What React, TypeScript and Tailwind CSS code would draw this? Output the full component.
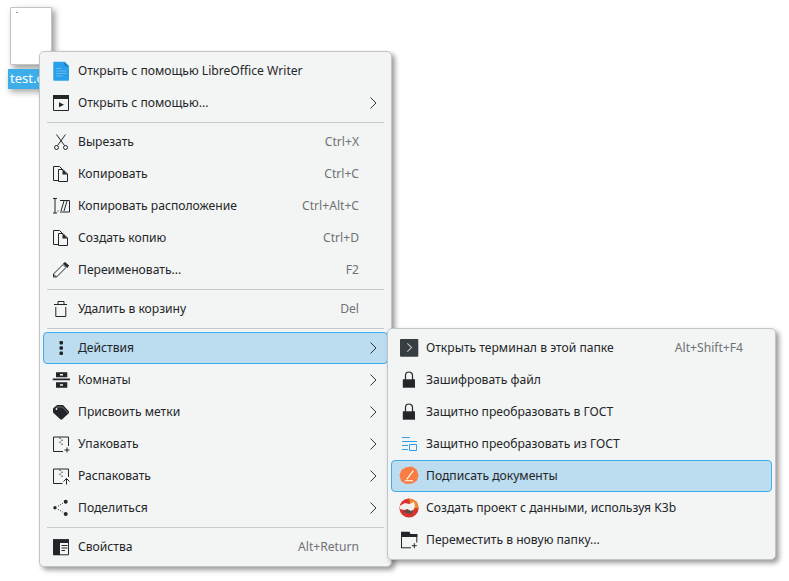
import type { ReactNode } from "react";

const ink = "#232629";

function Svg({ children }: { children: ReactNode }) {
  return (
    <svg width="22" height="22" viewBox="0 0 22 22" fill="none" stroke={ink} strokeWidth="1" className="shrink-0">
      {children}
    </svg>
  );
}

const icons: Record<string, ReactNode> = {
  writer: (
    <Svg>
      <path d="M3.300 2.500a.8.8 0 0 1 .8-.8H14.500l4.500 4.500v13.700a.8.8 0 0 1-.8.8H4.100a.8.8 0 0 1-.8-.8z" fill="#2a9fea" stroke="none" />
      <path d="M14.500 1.700l4.500 4.500h-4.500z" fill="#1b7fc4" stroke="none" />
      <path d="M6 8.500h5M6 11h10M6 13.500h10M6 16h7" stroke="#63baf1" />
    </Svg>
  ),
  openWith: (
    <Svg>
      <path d="M3.500 3.500h15v15h-15z" />
      <path d="M3 3h16v4H3z" fill={ink} stroke="none" />
      <path d="M9 10.300l5 2.500-5 2.500z" fill={ink} stroke="none" />
    </Svg>
  ),
  cut: (
    <Svg>
      <path d="M6.500 3.500l8 11M15.500 3.500l-8 11" />
      <circle cx="6.500" cy="16.500" r="2" />
      <circle cx="15.500" cy="16.500" r="2" />
    </Svg>
  ),
  copy: (
    <Svg>
      <path d="M8.500 17.500H3.500V3.500h6l3 3" />
      <path d="M8.500 6.500h4.500l4.500 4.500v7.500h-9z" fill="#f3f4f4" />
      <path d="M12.500 6.500l5 5h-5z" fill={ink} stroke="none" />
    </Svg>
  ),
  copyPath: (
    <Svg>
      <path d="M3 3.500h4M5 3.500v14.500M3 18h4" />
      <path d="M10 5.500h9.500v11.500H10" />
      <path d="M11 16l3-10M14 16l3-10" />
      <path d="M7.500 15.500h1v1h-1z" fill={ink} stroke="none" />
    </Svg>
  ),
  rename: (
    <Svg>
      <path d="M3.500 15l9.500-9.500 3 3-9.500 9.500H3.500z" />
      <path d="M4 15.500l2.500 2.500" />
      <path d="M13 4.500l2-1.500 4 3.500-1.500 2.500z" fill={ink} stroke="none" />
    </Svg>
  ),
  trash: (
    <Svg>
      <path d="M4 6.500h13M8 6V3.500h6V6M5.800 9v9.500h10V9" />
    </Svg>
  ),
  dots: (
    <Svg>
      <g fill={ink} stroke="none">
        <rect x="9.500" y="4" width="3.500" height="3.500" rx="1" />
        <rect x="9.500" y="9.200" width="3.500" height="3.500" rx="1" />
        <rect x="9.500" y="14.500" width="3.500" height="3.500" rx="1" />
      </g>
    </Svg>
  ),
  activities: (
    <Svg>
      <path d="M6 3.300h11.300v5H6zM6 13.300h11.300v5.400H6zM2.700 9.500H20v1.700H2.700z" fill={ink} stroke="none" />
      <path d="M10 5h3v1.600h-3zM10 15.200h3v1.600h-3z" fill="#f3f4f4" stroke="none" />
    </Svg>
  ),
  tag: (
    <Svg>
      <path d="M3 7.500L7 4h6l6 6.500v1.500L12 18.500h-1.500L3 11.500z" fill={ink} stroke="none" />
      <path d="M6 6h6.500l5.500 6" stroke="#7d8082" strokeWidth="0.8" />
      <circle cx="6.500" cy="8" r="0.9" fill="#f3f4f4" stroke="none" />
    </Svg>
  ),
  compress: (
    <Svg>
      <path d="M13 18.500H3.500V4h15v9" />
      <path d="M10 4.500v1.500M12 6.500v1.500M10 8.500v1.500M12 10.500V12" />
      <path d="M17 14.500v5M14.500 17h5" />
    </Svg>
  ),
  extract: (
    <Svg>
      <path d="M12.500 18.500H3.500V4h15v8" />
      <path d="M10 4.500v1.500M12 6.500v1.500M10 8.500v1.500M12 10.500V12" />
      <path d="M16.500 19.500v-6M13.500 16.500l3-3 3 3" />
    </Svg>
  ),
  share: (
    <Svg>
      <circle cx="5" cy="10.700" r="1.700" fill={ink} stroke="none" />
      <circle cx="15.700" cy="4.700" r="2" fill={ink} stroke="none" />
      <circle cx="15.700" cy="17" r="2" fill={ink} stroke="none" />
      <path d="M8 9.200l5-3M8 12.300l5 3" strokeDasharray="1 1.500" />
    </Svg>
  ),
  props: (
    <Svg>
      <path d="M3.500 3.800h15v15h-15z" />
      <path d="M3 3.300h16v3.700H3zM3 7h7v12H3z" fill={ink} stroke="none" />
      <path d="M11.500 9.500h6M11.500 12h6M11.500 14.500h3.500" />
    </Svg>
  ),
  terminal: (
    <svg width="22" height="22" viewBox="0 0 22 22" fill="none" className="shrink-0">
      <rect x="2" y="2" width="18.300" height="17.700" rx="1" fill="#383d41" />
      <path d="M9.300 6.300l4.300 4.200-4.300 4.200" stroke="#b6bbbf" strokeWidth="1.100" />
    </svg>
  ),
  lock: (
    <Svg>
      <path d="M7.500 11V6.500a3.500 3.500 0 0 1 7 0V11" strokeWidth="1.200" />
      <path d="M4.800 10.300h12.200v8.400H4.800z" fill={ink} stroke="none" />
    </Svg>
  ),
  gost: (
    <svg width="22" height="22" viewBox="0 0 22 22" fill="none" stroke="#2e9fe6" className="shrink-0">
      <path d="M4 4.500h8M4 8.500h15M4 12.500h6M4 16.500h6" />
      <path d="M11.500 11.500h7v6h-7z" />
    </svg>
  ),
  sign: (
    <svg width="22" height="22" viewBox="0 0 22 22" fill="none" className="shrink-0">
      <path d="M7.500 2.500l6.500-1 4.500 3 2 5.500-1.500 5.500-4.500 3-6.500.5-5-3-1.500-6 2-5z" fill="#f97c42" />
      <path d="M7 15.700h8M8.700 14.300l6.600-8.600" stroke="#fff" strokeWidth="1.100" />
    </svg>
  ),
  k3b: (
    <svg width="22" height="22" viewBox="0 0 22 22" fill="none" className="shrink-0">
      <circle cx="11" cy="11" r="9.600" fill="#d8322f" />
      <path d="M11 1.400a9.600 9.600 0 0 1 9.600 9.600l-5 .5-3-2.500z" fill="#ef8b2d" />
      <path d="M1.800 9l5-3 4.500 1 4.700-2 1 3.500-1.500 5-3 .5-3-2-3 1-4.700-1z" fill="#f1eeeb" />
      <path d="M5 15l4-2.500 4 1.500 3-1.500-3 4.500z" fill="#55504e" />
    </svg>
  ),
  newFolder: (
    <Svg>
      <path d="M3.500 19V8" />
      <path d="M3 2.700h8.500l1 2.300h7V8H3z" fill={ink} stroke="none" />
      <path d="M18.800 8v5.500M3.500 18.800H13" />
      <path d="M16.300 14.200v5M13.800 16.700h5" />
    </Svg>
  ),
};

type Row = {
  icon: string;
  label: string;
  shortcut?: string;
  arrow?: boolean;
  active?: boolean;
};

const mainMenu: (Row | "sep")[] = [
  { icon: "writer", label: "Открыть с помощью LibreOffice Writer" },
  { icon: "openWith", label: "Открыть с помощью...", arrow: true },
  "sep",
  { icon: "cut", label: "Вырезать", shortcut: "Ctrl+X" },
  { icon: "copy", label: "Копировать", shortcut: "Ctrl+C" },
  { icon: "copyPath", label: "Копировать расположение", shortcut: "Ctrl+Alt+C" },
  { icon: "copy", label: "Создать копию", shortcut: "Ctrl+D" },
  { icon: "rename", label: "Переименовать...", shortcut: "F2" },
  "sep",
  { icon: "trash", label: "Удалить в корзину", shortcut: "Del" },
  "sep",
  { icon: "dots", label: "Действия", arrow: true, active: true },
  { icon: "activities", label: "Комнаты", arrow: true },
  { icon: "tag", label: "Присвоить метки", arrow: true },
  { icon: "compress", label: "Упаковать", arrow: true },
  { icon: "extract", label: "Распаковать", arrow: true },
  { icon: "share", label: "Поделиться", arrow: true },
  "sep",
  { icon: "props", label: "Свойства", shortcut: "Alt+Return" },
];

const subMenu: Row[] = [
  { icon: "terminal", label: "Открыть терминал в этой папке", shortcut: "Alt+Shift+F4" },
  { icon: "lock", label: "Зашифровать файл" },
  { icon: "lock", label: "Защитно преобразовать в ГОСТ" },
  { icon: "gost", label: "Защитно преобразовать из ГОСТ" },
  { icon: "sign", label: "Подписать документы", active: true },
  { icon: "k3b", label: "Создать проект с данными, используя K3b" },
  { icon: "newFolder", label: "Переместить в новую папку..." },
];

function MenuRow({ icon, label, shortcut, arrow, active }: Row) {
  return (
    <div
      className={`flex h-8 items-center rounded-[4px] border pl-[6px] pr-[6px] ${
        active ? "border-[#3daee9] bg-[#bcdcf0]" : "border-transparent"
      }`}
    >
      {icons[icon]}
      <span className="ml-[6px] flex-1 whitespace-nowrap">{label}</span>
      {shortcut && <span className="text-[#6f7274]">{shortcut}</span>}
      <span className="flex w-[22px] shrink-0 justify-end">
        {arrow && (
          <svg width="16" height="16" viewBox="0 0 16 16" fill="none" stroke="#31363b" strokeWidth="1">
            <path d="M5.500 2.500L11 8l-5.500 5.500" />
          </svg>
        )}
      </span>
    </div>
  );
}

function Separator() {
  return (
    <div className="flex h-[7px] items-center px-[4px]">
      <div className="h-px w-full bg-[#c9cacb]" />
    </div>
  );
}

export default function App() {
  return (
    <div className="relative h-[581px] w-[789px] overflow-hidden bg-white font-['Noto_Sans',sans-serif] text-[12.13px] text-[#232629]">
      {/* desktop file */}
      <div className="absolute left-[10px] top-[7px] h-[58px] w-[42px] rounded-[1px] border border-[#c4c4c4] bg-white shadow-[3px_3px_6px_rgba(0,0,0,0.4)]">
        <div className="ml-[5px] mt-[4px] h-px w-[2px] bg-[#9a9a9a]" />
      </div>
      <div className="absolute left-[8px] top-[69px] flex h-[20px] w-[60px] items-center bg-[#3daee9] pl-[2px] text-[13px] text-white shadow-[2px_3px_6px_rgba(0,0,0,0.35)]">
        test.odt
      </div>

      {/* main context menu */}
      <div className="absolute left-[39px] top-[51px] w-[353px] rounded-[5px] border border-[#c3c4c5] bg-[#f3f4f4] p-[3px] shadow-[3px_3px_5px_rgba(0,0,0,0.4)]">
        {mainMenu.map((item, i) =>
          item === "sep" ? <Separator key={i} /> : <MenuRow key={i} {...item} />
        )}
      </div>

      {/* actions submenu */}
      <div className="absolute left-[387px] top-[328px] w-[389px] rounded-[5px] border border-[#c3c4c5] bg-[#f3f4f4] p-[3px] shadow-[3px_3px_5px_rgba(0,0,0,0.4)]">
        {subMenu.map((item, i) => (
          <MenuRow key={i} {...item} />
        ))}
      </div>
    </div>
  );
}
